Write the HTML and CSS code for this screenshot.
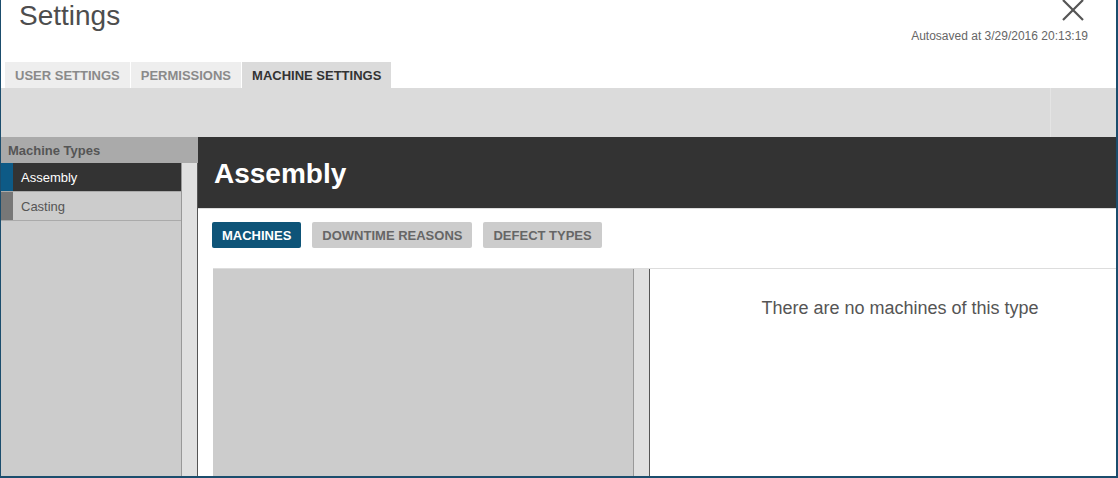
FILE: index.html
```html
<!DOCTYPE html>
<html>
<head>
<meta charset="utf-8">
<link rel="stylesheet" href="styles.css">
</head>
<body>
<div class="window">
  <div class="topbar">
    <h1 class="title">Settings</h1>
    <div class="topright">
      <svg class="close" width="22" height="21" viewBox="0 0 22 21"><path d="M1 0 L21 20 M21 0 L1 20" stroke="#555" stroke-width="2.2" fill="none"/></svg>
      <div class="autosave">Autosaved at 3/29/2016 20:13:19</div>
    </div>
  </div>
  <div class="tabs">
    <div class="tab">USER SETTINGS</div>
    <div class="tab">PERMISSIONS</div>
    <div class="tab active">MACHINE SETTINGS</div>
  </div>
  <div class="toolbar">
    <div class="toolbar-fill"></div>
    <div class="toolbar-end"></div>
  </div>
  <div class="body">
    <div class="sidebar">
      <div class="side-head">Machine Types</div>
      <div class="side-row">
        <div class="side-list">
          <div class="item selected"><span class="accent"></span><span class="label">Assembly</span></div>
          <div class="item"><span class="accent"></span><span class="label">Casting</span></div>
        </div>
        <div class="scroll"></div>
      </div>
    </div>
    <div class="main">
      <div class="main-head">Assembly</div>
      <div class="subtabs">
        <div class="subtab active">MACHINES</div>
        <div class="subtab">DOWNTIME REASONS</div>
        <div class="subtab">DEFECT TYPES</div>
      </div>
      <div class="content">
        <div class="list-panel"></div>
        <div class="scroll"></div>
        <div class="detail">There are no machines of this type</div>
      </div>
    </div>
  </div>
</div>
</body>
</html>
```
FILE: styles.css
```css
html, body {
  margin: 0;
  padding: 0;
  overflow: hidden;
  background: #fff;
}
body {
  font-family: "Liberation Sans", Arial, sans-serif;
}
.window {
  width: 1118px;
  height: 478px;
  box-sizing: border-box;
  border-left: 1px solid #1b4d6d;
  border-right: 2px solid #1b4d6d;
  border-bottom: 2px solid #1b4d6d;
  display: flex;
  flex-direction: column;
  overflow: hidden;
  background: #fff;
}
.topbar {
  height: 62px;
  display: flex;
  justify-content: space-between;
  flex-shrink: 0;
}
.title {
  margin: 0 0 0 18px;
  font-size: 28px;
  line-height: 32px;
  font-weight: normal;
  color: #4d4d4d;
}
.topright {
  display: flex;
  flex-direction: column;
  align-items: flex-end;
  padding-right: 28px;
}
.close {
  display: block;
  margin-right: 4px;
  margin-bottom: 8px;
}
.autosave {
  font-size: 12px;
  line-height: 14px;
  color: #666;
}
.tabs {
  display: flex;
  height: 26px;
  padding-left: 4px;
  flex-shrink: 0;
}
.tab {
  box-sizing: border-box;
  height: 26px;
  padding: 1px 10px 0;
  margin-right: 1px;
  line-height: 25px;
  font-size: 13px;
  font-weight: bold;
  color: #8a8a8a;
  background: #eeeeee;
}
.tab.active {
  background: #dbdbdb;
  color: #333;
}
.toolbar {
  height: 49px;
  background: #dbdbdb;
  display: flex;
  flex-shrink: 0;
}
.toolbar-fill {
  flex: 1;
}
.toolbar-end {
  width: 65px;
  border-left: 1px solid #e4e4e4;
}
.body {
  flex: 1;
  display: flex;
  min-height: 0;
}
.sidebar {
  width: 197px;
  flex-shrink: 0;
  display: flex;
  flex-direction: column;
  background: #cccccc;
}
.side-head {
  box-sizing: border-box;
  height: 26px;
  padding: 1px 0 0 7px;
  line-height: 25px;
  background: #aaaaaa;
  color: #555;
  font-size: 13px;
  font-weight: bold;
}
.side-row {
  flex: 1;
  display: flex;
}
.side-list {
  flex: 1;
}
.item {
  display: flex;
  height: 28px;
  border-bottom: 1px solid #aaaaaa;
  background: #cccccc;
}
.item .accent {
  width: 12px;
  background: #777;
}
.item .label {
  padding: 1px 0 0 8px;
  line-height: 27px;
  font-size: 13px;
  color: #555;
}
.item.selected {
  background: #333333;
}
.item.selected .accent {
  background: #0d5a86;
}
.item.selected .label {
  color: #fff;
}
.scroll {
  width: 15px;
  flex-shrink: 0;
  background: #e0e0e0;
  border-left: 1px solid #999;
  border-right: 1px solid #555;
}
.main {
  flex: 1;
  min-width: 0;
  display: flex;
  flex-direction: column;
  overflow: hidden;
}
.main-head {
  box-sizing: border-box;
  height: 72px;
  flex-shrink: 0;
  background: #333333;
  border-bottom: 1px solid #dddddd;
  color: #fff;
  font-size: 28px;
  font-weight: bold;
  display: flex;
  align-items: center;
  padding: 3px 0 0 16px;
}
.subtabs {
  display: flex;
  gap: 11px;
  padding: 13px 0 0 14px;
  flex-shrink: 0;
}
.subtab {
  box-sizing: border-box;
  height: 26px;
  line-height: 25px;
  padding: 1px 10px 0;
  border-radius: 2px;
  background: #cccccc;
  color: #666;
  font-size: 13px;
  font-weight: bold;
}
.subtab.active {
  background: #0e5478;
  color: #fff;
}
.content {
  flex: 1;
  display: flex;
  margin-top: 20px;
  margin-left: 15px;
  border-top: 1px solid #dddddd;
  width: 952px;
}
.list-panel {
  width: 420px;
  flex-shrink: 0;
  background: #cccccc;
}
.detail {
  width: 500px;
  flex-shrink: 0;
  text-align: center;
  padding-top: 28px;
  font-size: 18px;
  line-height: 22px;
  color: #555;
}
```
